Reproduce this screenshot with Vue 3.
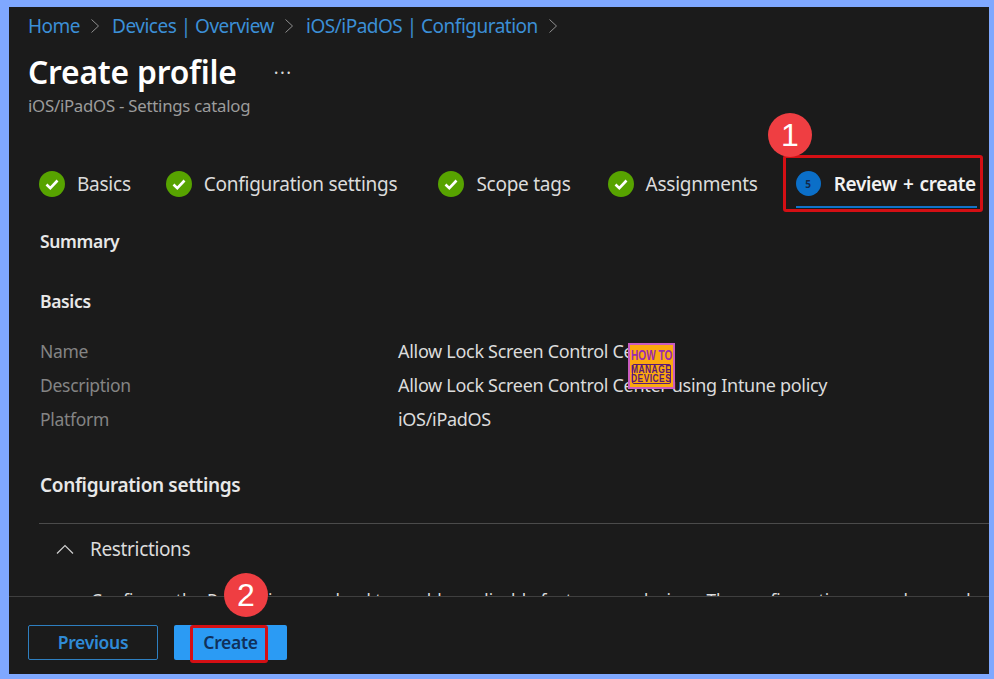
<script setup>
const crumbs = ['Home', 'Devices | Overview', 'iOS/iPadOS | Configuration']
const steps = ['Basics', 'Configuration settings', 'Scope tags', 'Assignments']
const basics = [
  ['Name', 'Allow Lock Screen Control Center'],
  ['Description', 'Allow Lock Screen Control Center using Intune policy'],
  ['Platform', 'iOS/iPadOS'],
]
</script>

<template>
  <div class="frame">
    <div class="scroll">
      <nav class="crumbs">
        <template v-for="c in crumbs" :key="c">
          <a class="crumb">{{ c }}</a>
          <svg class="sep" width="10" height="16" viewBox="0 0 10 16"><path d="M1.5 1.5 8.5 8 1.5 14.5" fill="none" stroke="#8f8f8f" stroke-width="1"/></svg>
        </template>
      </nav>
      <div class="title-row">
        <h1>Create profile</h1>
        <span class="dots">···</span>
      </div>
      <div class="subtitle">iOS/iPadOS - Settings catalog</div>

      <div class="steps">
        <div v-for="s in steps" :key="s" class="step">
          <svg width="26" height="26" viewBox="0 0 26 26"><circle cx="13" cy="13" r="13" fill="#57a300"/><path d="M7.5 13.5 11.3 17.2 18.5 9.5" fill="none" stroke="#fff" stroke-width="2.6"/></svg>
          <span>{{ s }}</span>
        </div>
        <div class="step active">
          <span class="num">5</span>
          <span>Review + create</span>
        </div>
      </div>

      <div class="body">
        <h2 class="summary">Summary</h2>
        <h2 class="basics">Basics</h2>
        <dl class="rows">
          <div v-for="r in basics" :key="r[0]" class="row">
            <dt>{{ r[0] }}</dt>
            <dd>{{ r[1] }}</dd>
          </div>
        </dl>
        <h2 class="config">Configuration settings</h2>
        <hr />
        <div class="acc">
          <svg width="18" height="10" viewBox="0 0 18 10"><path d="M1 9.500 9 1.500 17 9.500" fill="none" stroke="#d0d0d0" stroke-width="1.200"/></svg>
          <span>Restrictions</span>
        </div>
        <p class="desc">Configure the Restrictions payload to enable or disable features on devices. The configurations are also used</p>
      </div>
    </div>

    <footer class="foot">
      <button class="btn prev">Previous</button>
      <button class="btn create">Create</button>
    </footer>

    <div class="mark mark1"></div>
    <div class="mark mark2"></div>
    <div class="badge badge1">1</div>
    <div class="badge badge2">2</div>
    <div class="stamp">
      <span class="how">HOW TO</span>
      <span class="manage"><span class="line">MANAGE</span><span class="line">DEVICES</span></span>
    </div>
  </div>
</template>

<style>
html, body { margin: 0; background: #7fa8ff; }
</style>

<style scoped>
.frame {
  position: relative;
  box-sizing: border-box;
  width: 994px;
  height: 679px;
  border: solid #7fa8ff;
  border-width: 7px 5px 5px 9px;
  background: #1b1b1b;
  display: flex;
  flex-direction: column;
  overflow: hidden;
  font-family: "Noto Sans", "Open Sans", sans-serif;
  color: #e6e6e6;
}
.scroll { flex: 0 0 589px; overflow: hidden; }
.crumbs {
  display: flex;
  align-items: center;
  padding: 7px 0 0 19px;
  height: 24px;
}
.crumb { color: #3b8fd6; font-size: 19px; letter-spacing: -0.5px; white-space: nowrap; }
.sep { margin: 0 12px 0 10px; }
.title-row { display: flex; align-items: center; padding: 11px 0 0 19px; height: 46px; }
h1 { margin: 0; font-size: 31.800px; font-weight: 600; color: #fff; letter-spacing: -0.2px; line-height: 46px; }
.dots { margin-left: 37px; font-size: 18px; color: #d8d8d8; line-height: 1; letter-spacing: 1.5px; }
.subtitle { padding-left: 19px; font-size: 16.800px; color: #9c9c9c; letter-spacing: -0.25px; line-height: 22px; }

.steps { display: flex; align-items: center; height: 54px; margin-top: 40px; padding-left: 30px; }
.step { display: flex; align-items: center; gap: 12px; font-size: 19px; letter-spacing: -0.25px; color: #dcdcdc; white-space: nowrap; }
.step:nth-child(1) { margin-right: 35px; }
.step:nth-child(2) { margin-right: 41px; }
.step:nth-child(3) { margin-right: 37px; }
.step:nth-child(4) { margin-right: 38px; }
.step.active {
  align-self: flex-start;
  margin: 3px 0 0;
  height: 48px;
  gap: 13px;
  width: 181px;
  border-bottom: 2px solid #1173c9;
  box-sizing: border-box;
  padding-top: 1px;
  color: #f2f2f2;
  font-weight: 600;
  font-size: 19px;
  letter-spacing: -0.35px;
  word-spacing: 1.5px;
}
.num {
  width: 25px; height: 25px; border-radius: 50%;
  background: #0b6fc8; color: #12294a;
  font-size: 10px; font-weight: 700; letter-spacing: 0;
  display: flex; align-items: center; justify-content: center;
  flex: none;
}

.body { padding: 0 0 0 31px; }
h2 { margin: 0; font-size: 17.500px; font-weight: 600; color: #e8e8e8; letter-spacing: -0.35px; line-height: 26px; }
.summary { margin-top: 17px; }
.basics { margin-top: 34px; }
.rows { margin: 20px 0 0; }
.row { display: flex; height: 34px; align-items: center; font-size: 17.500px; letter-spacing: -0.3px; }
dt { width: 358px; color: #848484; }
dd { margin: 0; color: #dcdcdc; white-space: nowrap; font-size: 18px; }
.config { margin-top: 36px; font-size: 19px; }
hr { border: 0; border-top: 1px solid #4b4b4b; margin: 25px 0 0 -1px; }
.acc { display: flex; align-items: center; gap: 16px; margin-top: 12px; padding-left: 16px; height: 26px; font-size: 19px; letter-spacing: -0.35px; color: #dcdcdc; }
.desc { margin: 27px 0 0 51px; font-size: 17.300px; letter-spacing: 0; color: #dcdcdc; white-space: nowrap; line-height: 24px; }

.foot {
  flex: 1;
  border-top: 1px solid #3f3f3f;
  display: flex;
  align-items: flex-start;
  gap: 16px;
  padding: 28px 0 0 19px;
  position: relative;
  background: #1b1b1b;
}
.btn {
  height: 35px; border-radius: 2px; font: 600 17.500px "Noto Sans", "Open Sans", sans-serif; letter-spacing: -0.3px;
  padding: 0 0 2px; cursor: pointer;
}
.prev { width: 130px; background: transparent; border: 1px solid #2e7fc0; color: #2f8ad6; }
.create { width: 113px; background: #2b9bf4; border: 0; color: #10305a; }

.mark { position: absolute; border: 3px solid #d40f14; border-radius: 3px; box-sizing: border-box; }
.mark1 { left: 774px; top: 148px; width: 200px; height: 57px; }
.mark2 { left: 181px; top: 618px; width: 78px; height: 38px; }
.badge {
  position: absolute; width: 44px; height: 44px; border-radius: 50%;
  background: #ef3e42; color: #fff;
  font: 32px/44px "Liberation Sans", Arial, sans-serif;
  text-align: center;
}
.badge1 { left: 759px; top: 106px; }
.badge2 { left: 215px; top: 566px; }
.stamp {
  position: absolute; left: 619px; top: 336px; width: 47px; height: 46px;
  box-sizing: border-box; background: #fba90f; border: 2px solid #c95cc0;
  display: flex; flex-direction: column; align-items: center;
  font-family: "Liberation Sans", sans-serif; font-weight: 700; color: #9a2bb0;
  overflow: hidden;
}
.how { font-size: 14px; line-height: 16px; margin-top: 2px; transform: scaleX(0.72); white-space: nowrap; }
.manage {
  box-sizing: border-box; width: 39px; height: 20px; margin-top: 1px;
  border: 1px solid #5a1878; border-radius: 2px; color: #5a1878;
  display: flex; flex-direction: column; align-items: center;
}
.line { font-size: 10.500px; line-height: 9px; letter-spacing: 0.6px; transform: scaleX(0.8); white-space: nowrap; }
</style>
